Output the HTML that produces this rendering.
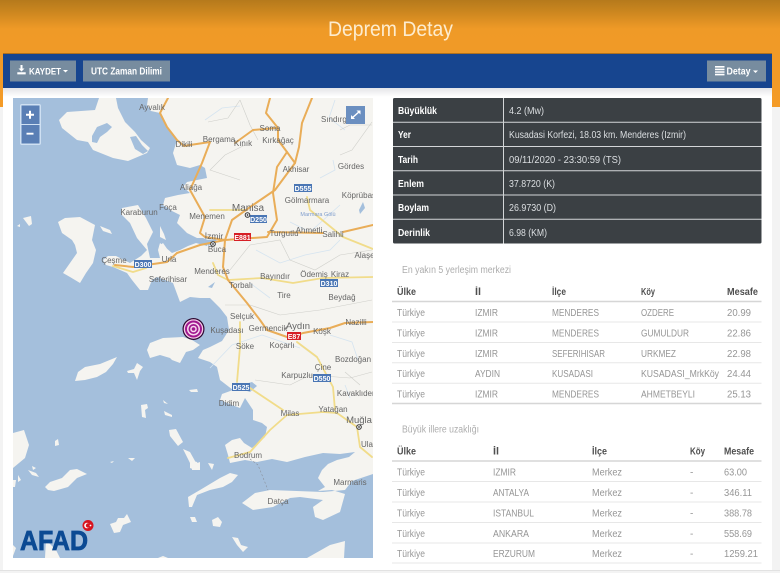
<!DOCTYPE html>
<html lang="tr"><head><meta charset="utf-8"><title>Deprem Detay</title>
<style>
html,body{margin:0;padding:0;width:780px;height:573px;overflow:hidden;background:#f3f3f3}
svg{display:block;font-family:"Liberation Sans",sans-serif;filter:blur(.3px)}
.lb{font-size:8px;fill:#666}
.bd{font-size:7px;font-weight:bold;fill:#fff;text-anchor:middle}
.w{font-size:10px;font-weight:bold;fill:#fff}
.v{font-size:10px;fill:#dcdfe2}
.h{font-size:10px;font-weight:bold;fill:#4f4f4f}
.c{font-size:10px;fill:#969696}
.t{font-size:10px;fill:#adadad}
.lm{stroke:#e7e7e7;stroke-width:1}
.lh{stroke:#d6d6d6;stroke-width:1.500}
</style></head><body>
<svg width="780" height="573" viewBox="0 0 780 573" xmlns="http://www.w3.org/2000/svg">
<defs>
<linearGradient id="top" x1="0" y1="0" x2="0" y2="1"><stop offset="0" stop-color="#b57a1c"/><stop offset=".1" stop-color="#c9851f"/><stop offset=".27" stop-color="#ef9a27"/><stop offset="1" stop-color="#f49b27"/></linearGradient>
<linearGradient id="sh" x1="0" y1="0" x2="0" y2="1"><stop offset="0" stop-color="#e4e5e8"/><stop offset="1" stop-color="#fff"/></linearGradient>
<clipPath id="mc"><rect x="13" y="98" width="360" height="460"/></clipPath>
</defs>
<rect width="780" height="573" fill="#f3f3f3"/>
<rect width="780" height="107" fill="url(#top)"/>
<rect x="3" y="54" width="769" height="516" fill="#fff"/>
<rect x="3" y="88" width="769" height="9" fill="url(#sh)"/>
<rect x="0" y="570" width="780" height="1" fill="#e2e2e2"/>
<rect x="3" y="53" width="769" height="1" fill="#b0701c"/>
<rect x="3" y="54" width="769" height="34" fill="#17458f"/>
<text x="328" y="36" font-size="21" fill="#fdeccf" textLength="125" lengthAdjust="spacingAndGlyphs">Deprem Detay</text>

<!-- Buttons -->
<rect x="10" y="60.500" width="66" height="21" fill="#778c9f"/>
<path d="M20.500 65h2v3.500h2l-3 3-3-3h2zM17.300 72.200h8.400v2.200h-8.400z" fill="#fff"/>
<text x="29" y="74.500" font-size="9.500" font-weight="bold" fill="#fff" textLength="32" lengthAdjust="spacingAndGlyphs">KAYDET</text>
<path d="M63 70h5l-2.500 2.500z" fill="#fff"/>
<rect x="83" y="60.500" width="87" height="21" fill="#778c9f"/>
<text x="91" y="74.500" font-size="10" font-weight="bold" fill="#fff" textLength="71" lengthAdjust="spacingAndGlyphs">UTC Zaman Dilimi</text>
<rect x="707" y="60.500" width="59" height="21" fill="#778c9f"/>
<path d="M715 66h9.500v1.600H715zM715 68.600h9.500v1.600H715zM715 71.200h9.500v1.600H715zM715 73.800h9.500v1.600H715z" fill="#fff"/>
<text x="726.500" y="74.500" font-size="10" font-weight="bold" fill="#fff" textLength="24" lengthAdjust="spacingAndGlyphs">Detay</text>
<path d="M753 70.500h5l-2.500 2.500z" fill="#fff"/>

<!-- Map -->
<g clip-path="url(#mc)">
<rect x="13" y="98" width="360" height="460" fill="#a4bfdc"/>
<g fill="#f5f4f0">
<!-- Mainland -->
<path d="M148 98L147 105 151 111 160 113 167 127 177 140 173 153 177 165 190 168 200 165 205 168 207 178 197 180 187 182 183 187 190 193 178 195 165 198 163 205 172 211 180 215 177 223 187 233 197 238 203 238 208 240 207 246 196 243 188 246 180 250 172 253 165 247 160 243 158 250 160 258 150 258 147 244 153 232 146 218 138 205 122 208 121 214 130 223 137 238 147 250 141 256 130 263 116 256 108 256 103 260 106 265 113 267 127 273 132 280 140 290 148 290 152 280 157 277 173 283 180 302 190 297 200 298 210 298 220 308 227 317 229 330 222 341 210 347 203 350 198 358 210 362 217 367 220 380 233 390 222 394 220 400 232 405 240 408 245 398 249 404 253 410 253 420 262 423 267 427 265 437 258 443 252 448 244 443 240 438 232 440 225 445 228 455 230 463 245 460 257 462 272 459 287 462 305 457 323 453 340 454 355 452 349 457 337 460 328 464 322 470 318 478 325 487 318 491 332 490 345 494 340 512 323 520 315 517 313 507 323 500 300 497 290 498 273 507 253 510 242 503 255 493 270 490 323 492 345 490 352 481 373 474V98Z"/>
<!-- Lesbos -->
<path d="M99 98L95 110 67 112 59 120 62 128 77 140 88 142 93 150 113 158 128 161 147 153 150 148 141 140 135 132 125 122 118 108 116 98Z"/>
<!-- Chios -->
<path d="M58 222L65 218 80 217 95 225 92 240 96 250 93 263 86 273 80 283 70 277 63 273 70 263 77 253 75 245 72 240 62 233Z"/>
<path d="M23 218L31 216 32 224 29 226 26 222ZM17 226L20 224 20 227Z"/>
<path d="M100 226L110 230 112 234 103 231ZM160 226L164 234 166 240 160 237ZM159 246L163 243 170 253 160 258Z"/>
<!-- Samos -->
<path d="M147 350L150 343 163 338 183 337 192 340 200 345 193 350 186 352 180 363 172 360 170 358 160 355 150 358Z"/>
<!-- Ikaria -->
<path d="M75 381L78 372 85 367 100 364 117 357 113 364 106 372 97 377 85 380Z"/>
<path d="M127 371L134 369 137 363 143 367 140 371 137 380 134 373 128 373ZM189 390L197 389 198 392 191 392ZM141 405L147 404 148 408 145 410 146 418 142 417ZM163 400L168 404 164 403ZM164 411L172 415 172 417 165 415Z"/>
<path d="M169 430L176 429 183 442 178 446 170 436ZM183 449L190 452 195 461 197 468 200 465 200 470 193 470 190 463Z"/>
<!-- Kos -->
<path d="M188 497L200 490 220 478 230 473 238 475 232 482 223 487 210 490 197 495 192 507 189 507Z"/>
<path d="M190 460L197 462 200 468 195 470 190 468ZM192 465L200 462V470L192 470ZM208 463L214 464 212 470ZM212 520L218 517 222 522 220 527 213 526ZM232 537L238 538 241 545 248 547 243 552 237 545ZM190 517H195L197 522 192 522Z"/>
<!-- Western islands -->
<path d="M13 433L24 430 29 445 25 458 13 468ZM13 480L16 480 15 487 13 487ZM13 545L16 548 13 556ZM48 490L45 487 50 482 62 478 70 470 77 469 87 474 77 478 68 487 54 491ZM28 470L36 473 39 477 32 475ZM32 466L36 468 33 470ZM18 475L21 480 18 482ZM110 524L116 522 118 518 124 518 127 514 131 522 123 525 120 532 114 533ZM55 441L58 439 59 445 55 446ZM128 458L135 458 132 461ZM110 462L114 461 112 463ZM46 540L56 550 60 558 45 558ZM158 558L163 556 168 558Z"/>
<path d="M307 558L330 545 345 541 344 558Z"/>
</g>
<g fill="#a4bfdc">
<path d="M92 136L97 127 107 123 112 127 107 132 100 137 97 143 92 142ZM130 137L136 136 142 145 148 151 143 154 135 149Z"/>
<path d="M245 384L252 382 257 386 250 392 244 390Z"/>
<path d="M359 210L363 202 365 208 360 214Z"/>
<path d="M206 240L216 239 217 242 208 246Z"/>
<path d="M208 287L215 282 212 288Z"/>
</g>
<!-- rivers and borders -->
<g fill="none" stroke="#d5e4f0" stroke-width=".8">
<path d="M205 120L222 108 240 106M335 100L329 118 345 130M333 160L335 170 320 178M290 222L310 232 340 205M256 250L280 263 305 255 330 250 340 240M250 283L270 298M210 368L232 345 262 335M262 335L300 348M330 335L352 342 358 360M345 385L350 398M300 345L320 360"/>
</g>
<g fill="none" stroke="#cfcfca" stroke-width=".6">
<path d="M208 122L228 118 240 100M240 100L250 125 258 140M240 180L210 170 225 155 245 145M340 130L350 125 372 125M340 155L352 150 372 122M230 270L250 245 280 240 290 260 315 270 340 255 372 250M225 305L250 305 280 315 320 310 372 300M255 380L290 385 310 375 350 378 372 372M345 372L360 385"/>
</g>
<path d="M250 459L258 465 268 490" fill="none" stroke-dasharray="2 2" stroke="#8a8f98" stroke-width=".6"/>
<!-- yellow roads -->
<g fill="none" stroke="#f1dc8a" stroke-width="1.800" stroke-linejoin="round" stroke-linecap="round">
<path d="M228 458L250 452 270 430 287 415 323 412 337 413 357 427 360 447 372 457"/>
<path d="M297 342L317 357 333 387 335 410"/>
<path d="M240 322L240 347 237 382M250 388L283 410"/>
<path d="M307 197L310 210 343 237 373 249"/>
<path d="M228 280L262 278 293 283 323 278 373 277"/>
<path d="M213 263L218 275 228 280M210 210L247 210"/>
<path d="M113 266L133 272 146 268"/>
</g>
<!-- orange roads -->
<g fill="none" stroke="#e9ad58" stroke-width="2" stroke-linejoin="round" stroke-linecap="round">
<path d="M312 98L302 123 299 147 295 163 275 190 253 205 232 220 225 240"/>
<path d="M270 98L266 113 278 128 278 140 287 152 295 163"/>
<path d="M287 152L277 167 273 193 277 220 267 237 225 240"/>
<path d="M168 98L160 113 167 127 177 140 184 146 190 145 210 142 202 163 190 190 205 217 200 233 205 237 225 240"/>
<path d="M235 143L253 130 277 128"/>
<path d="M225 240L200 245 177 253 167 262 133 267 115 265"/>
<path d="M225 240L223 267 228 280 247 303 260 320 267 330 290 338 303 333 330 328 345 323 373 322"/>
<path d="M268 232L323 233M343 232L373 225"/>
</g>
<!-- Labels -->
<g text-anchor="middle">
<text class="lb" x="152" y="110">Ayvalık</text><text class="lb" x="219" y="142">Bergama</text><text class="lb" x="243" y="146">Kınık</text><text class="lb" x="270" y="131">Soma</text><text class="lb" x="278" y="143">Kırkağaç</text><text class="lb" x="335" y="122">Sındırgı</text><text class="lb" x="184" y="147">Dikili</text><text class="lb" x="296" y="172">Akhisar</text><text class="lb" x="351" y="169">Gördes</text><text class="lb" x="307" y="203">Gölmarmara</text><text class="lb" x="360" y="198">Köprübaşı</text><text class="lb" x="191" y="190">Aliağa</text><text class="lb" x="168" y="210">Foça</text><text class="lb" x="139" y="215">Karaburun</text><text class="lb" x="207" y="219">Menemen</text><text x="248" y="211" font-size="10" fill="#666">Manisa</text><text x="318" y="216" font-size="5.500" fill="#7e9ccc">Marmara Gölü</text><text class="lb" x="284" y="236">Turgutlu</text><text class="lb" x="309" y="233">Ahmetli</text><text class="lb" x="333" y="237">Salihli</text><text class="lb" x="369" y="258">Alaşehir</text><text x="214" y="239" font-size="8.500" fill="#666">İzmir</text><text class="lb" x="217" y="252">Buca</text><text class="lb" x="212" y="274">Menderes</text><text class="lb" x="169" y="262">Urla</text><text class="lb" x="114" y="263">Çeşme</text><text class="lb" x="168" y="282">Seferihisar</text><text class="lb" x="275" y="279">Bayındır</text><text class="lb" x="314" y="277">Ödemiş</text><text class="lb" x="340" y="277">Kiraz</text><text class="lb" x="241" y="288">Torbalı</text><text class="lb" x="284" y="298">Tire</text><text class="lb" x="342" y="300">Beydağ</text><text class="lb" x="242" y="319">Selçuk</text><text class="lb" x="268" y="331">Germencik</text><text x="298" y="329" font-size="9.500" fill="#666">Aydın</text><text class="lb" x="356" y="325">Nazilli</text><text class="lb" x="227" y="333">Kuşadası</text><text class="lb" x="322" y="334">Köşk</text><text class="lb" x="282" y="348">Koçarlı</text><text class="lb" x="245" y="349">Söke</text><text class="lb" x="353" y="362">Bozdoğan</text><text class="lb" x="323" y="370">Çine</text><text class="lb" x="297" y="378">Karpuzlu</text><text class="lb" x="358" y="396">Kavaklıdere</text><text class="lb" x="229" y="406">Didim</text><text class="lb" x="290" y="416">Milas</text><text class="lb" x="333" y="412">Yatağan</text><text x="359" y="423" font-size="9.500" fill="#666">Muğla</text><text class="lb" x="367" y="447">Ula</text><text class="lb" x="248" y="458">Bodrum</text><text class="lb" x="350" y="485">Marmaris</text><text class="lb" x="278" y="504">Datça</text>
</g>
<!-- Road badges -->
<rect x="134" y="260" width="18" height="8" fill="#4a76b4"/><text class="bd" x="143" y="267">D300</text>
<rect x="294" y="184" width="18" height="8" fill="#4a76b4"/><text class="bd" x="303" y="191">D555</text>
<rect x="250" y="215" width="17" height="8" fill="#4a76b4"/><text class="bd" x="258.500" y="222">D250</text>
<rect x="320" y="279" width="18" height="8" fill="#4a76b4"/><text class="bd" x="329" y="286">D310</text>
<rect x="313" y="374" width="18" height="8" fill="#4a76b4"/><text class="bd" x="322" y="381">D550</text>
<rect x="232" y="383" width="18" height="8" fill="#4a76b4"/><text class="bd" x="241" y="390">D525</text>
<rect x="234" y="233" width="17" height="8" fill="#d61f26"/><text class="bd" x="242.500" y="240">E881</text>
<rect x="287" y="332" width="14" height="8" fill="#d61f26"/><text class="bd" x="294" y="339">E87</text>
<!-- City markers -->
<g fill="#fff" stroke="#333" stroke-width="1"><circle cx="247.500" cy="215" r="2.300"/><circle cx="213" cy="244" r="2.300"/><circle cx="359" cy="427" r="2.300"/></g>
<g fill="#333"><circle cx="247.500" cy="215" r=".9"/><circle cx="213" cy="244" r=".9"/><circle cx="359" cy="427" r=".9"/></g>
<!-- Epicentre -->
<circle cx="193.500" cy="329" r="11" fill="#2c0830"/>
<circle cx="193.500" cy="329" r="9.800" fill="#f4cbe8"/>
<circle cx="193.500" cy="329" r="8.500" fill="#a0178f"/>
<circle cx="193.500" cy="329" r="6.500" fill="#f7d8ee"/>
<circle cx="193.500" cy="329" r="5" fill="#a0178f"/>
<circle cx="193.500" cy="329" r="3.300" fill="#f7d8ee"/>
<circle cx="193.500" cy="329" r="1.800" fill="#a0178f"/>
</g>
<!-- Map controls -->
<rect x="20" y="104" width="21" height="41" rx="2" fill="#cfe0f2"/>
<rect x="21.500" y="105.500" width="18" height="18.500" fill="#5a7fb5"/>
<rect x="21.500" y="125" width="18" height="18.500" fill="#5a7fb5"/>
<path d="M26 113.800h8v2h-8zM29 110.800h2v8h-2zM26.500 132.800h7v1.800h-7z" fill="#fff"/>
<rect x="346" y="106" width="19" height="18" fill="#6b8fc0"/>
<path d="M351.500 118.500L360 111" stroke="#fff" stroke-width="1.500" fill="none"/>
<path d="M356.500 110.500h4v4zM351 115v4h4z" fill="#fff"/>
<!-- AFAD logo -->
<text x="20" y="550" font-size="28" font-weight="bold" fill="#0c4a93" stroke="#0c4a93" stroke-width=".8" textLength="68" lengthAdjust="spacingAndGlyphs">AFAD</text>
<circle cx="88" cy="525.500" r="5.500" fill="#d7141f"/>
<circle cx="87" cy="525.500" r="2.800" fill="#fff"/><circle cx="88" cy="525.500" r="2.200" fill="#d7141f"/>
<circle cx="90.500" cy="525.500" r=".9" fill="#fff"/>

<!-- Detail table -->
<rect x="393" y="98" width="368.500" height="145.500" rx="1.500" fill="#3b4044"/>
<path d="M393 122.300h368.500M393 146.500h368.500M393 170.800h368.500M393 195h368.500M393 219.300h368.500" stroke="#d3d6d8" stroke-width="1"/>
<path d="M503.500 98v145.500" stroke="#d3d6d8" stroke-width="1"/>
<text class="w" x="398" y="114" textLength="39" lengthAdjust="spacingAndGlyphs">Büyüklük</text>
<text class="w" x="398" y="138" textLength="13" lengthAdjust="spacingAndGlyphs">Yer</text>
<text class="w" x="398" y="163" textLength="20" lengthAdjust="spacingAndGlyphs">Tarih</text>
<text class="w" x="398" y="187" textLength="26" lengthAdjust="spacingAndGlyphs">Enlem</text>
<text class="w" x="398" y="211" textLength="31" lengthAdjust="spacingAndGlyphs">Boylam</text>
<text class="w" x="398" y="236" textLength="32" lengthAdjust="spacingAndGlyphs">Derinlik</text>
<text class="v" x="509" y="114" textLength="35" lengthAdjust="spacingAndGlyphs">4.2 (Mw)</text>
<text class="v" x="509" y="138" textLength="177" lengthAdjust="spacingAndGlyphs">Kusadasi Korfezi, 18.03 km. Menderes (Izmir)</text>
<text class="v" x="509" y="163" textLength="112" lengthAdjust="spacingAndGlyphs">09/11/2020 - 23:30:59 (TS)</text>
<text class="v" x="509" y="187" textLength="46" lengthAdjust="spacingAndGlyphs">37.8720 (K)</text>
<text class="v" x="509" y="211" textLength="47" lengthAdjust="spacingAndGlyphs">26.9730 (D)</text>
<text class="v" x="509" y="236" textLength="38" lengthAdjust="spacingAndGlyphs">6.98 (KM)</text>

<!-- Table 1 -->
<text class="t" x="402" y="273" textLength="109" lengthAdjust="spacingAndGlyphs">En yakın 5 yerleşim merkezi</text>
<text class="h" x="397" y="295" textLength="19" lengthAdjust="spacingAndGlyphs">Ülke</text>
<text class="h" x="475" y="295" textLength="6" lengthAdjust="spacingAndGlyphs">İl</text>
<text class="h" x="552" y="295" textLength="14" lengthAdjust="spacingAndGlyphs">İlçe</text>
<text class="h" x="641" y="295" textLength="14" lengthAdjust="spacingAndGlyphs">Köy</text>
<text class="h" x="727" y="295" textLength="31" lengthAdjust="spacingAndGlyphs">Mesafe</text>
<path class="lh" d="M392 301.500h369.500"/>
<path class="lm" d="M392 322h369.500M392 342.500h369.500M392 362.800h369.500M392 383.300h369.500"/>
<path class="lh" d="M392 403.500h369.500"/>
<g>
<text class="c" x="397" y="316" textLength="28" lengthAdjust="spacingAndGlyphs">Türkiye</text><text class="c" x="475" y="316" textLength="23" lengthAdjust="spacingAndGlyphs">IZMIR</text><text class="c" x="552" y="316" textLength="47" lengthAdjust="spacingAndGlyphs">MENDERES</text><text class="c" x="641" y="316" textLength="33" lengthAdjust="spacingAndGlyphs">OZDERE</text><text class="c" x="727" y="316" textLength="24" lengthAdjust="spacingAndGlyphs">20.99</text>
<text class="c" x="397" y="336.500" textLength="28" lengthAdjust="spacingAndGlyphs">Türkiye</text><text class="c" x="475" y="336.500" textLength="23" lengthAdjust="spacingAndGlyphs">IZMIR</text><text class="c" x="552" y="336.500" textLength="47" lengthAdjust="spacingAndGlyphs">MENDERES</text><text class="c" x="641" y="336.500" textLength="48" lengthAdjust="spacingAndGlyphs">GUMULDUR</text><text class="c" x="727" y="336.500" textLength="24" lengthAdjust="spacingAndGlyphs">22.86</text>
<text class="c" x="397" y="357" textLength="28" lengthAdjust="spacingAndGlyphs">Türkiye</text><text class="c" x="475" y="357" textLength="23" lengthAdjust="spacingAndGlyphs">IZMIR</text><text class="c" x="552" y="357" textLength="53" lengthAdjust="spacingAndGlyphs">SEFERIHISAR</text><text class="c" x="641" y="357" textLength="35" lengthAdjust="spacingAndGlyphs">URKMEZ</text><text class="c" x="727" y="357" textLength="24" lengthAdjust="spacingAndGlyphs">22.98</text>
<text class="c" x="397" y="377" textLength="28" lengthAdjust="spacingAndGlyphs">Türkiye</text><text class="c" x="475" y="377" textLength="25" lengthAdjust="spacingAndGlyphs">AYDIN</text><text class="c" x="552" y="377" textLength="41" lengthAdjust="spacingAndGlyphs">KUSADASI</text><text class="c" x="641" y="377" textLength="78" lengthAdjust="spacingAndGlyphs">KUSADASI_MrkKöy</text><text class="c" x="727" y="377" textLength="24" lengthAdjust="spacingAndGlyphs">24.44</text>
<text class="c" x="397" y="397.500" textLength="28" lengthAdjust="spacingAndGlyphs">Türkiye</text><text class="c" x="475" y="397.500" textLength="23" lengthAdjust="spacingAndGlyphs">IZMIR</text><text class="c" x="552" y="397.500" textLength="47" lengthAdjust="spacingAndGlyphs">MENDERES</text><text class="c" x="641" y="397.500" textLength="54" lengthAdjust="spacingAndGlyphs">AHMETBEYLI</text><text class="c" x="727" y="397.500" textLength="24" lengthAdjust="spacingAndGlyphs">25.13</text>
</g>

<!-- Table 2 -->
<text class="t" x="402" y="432.500" textLength="77" lengthAdjust="spacingAndGlyphs">Büyük illere uzaklığı</text>
<text class="h" x="397" y="454.500" textLength="19" lengthAdjust="spacingAndGlyphs">Ülke</text>
<text class="h" x="493" y="454.500" textLength="6" lengthAdjust="spacingAndGlyphs">İl</text>
<text class="h" x="592" y="454.500" textLength="15" lengthAdjust="spacingAndGlyphs">İlçe</text>
<text class="h" x="690" y="454.500" textLength="15" lengthAdjust="spacingAndGlyphs">Köy</text>
<text class="h" x="724" y="454.500" textLength="30" lengthAdjust="spacingAndGlyphs">Mesafe</text>
<path class="lh" d="M392 461h369.500"/>
<path class="lm" d="M392 481.500h369.500M392 502h369.500M392 522.500h369.500M392 543h369.500M392 563h369.500"/>
<g>
<text class="c" x="397" y="475.500" textLength="28" lengthAdjust="spacingAndGlyphs">Türkiye</text><text class="c" x="493" y="475.500" textLength="23" lengthAdjust="spacingAndGlyphs">IZMIR</text><text class="c" x="592" y="475.500" textLength="30" lengthAdjust="spacingAndGlyphs">Merkez</text><text class="c" x="690" y="475.500">-</text><text class="c" x="724" y="475.500" textLength="23" lengthAdjust="spacingAndGlyphs">63.00</text>
<text class="c" x="397" y="496" textLength="28" lengthAdjust="spacingAndGlyphs">Türkiye</text><text class="c" x="493" y="496" textLength="36" lengthAdjust="spacingAndGlyphs">ANTALYA</text><text class="c" x="592" y="496" textLength="30" lengthAdjust="spacingAndGlyphs">Merkez</text><text class="c" x="690" y="496">-</text><text class="c" x="724" y="496" textLength="28" lengthAdjust="spacingAndGlyphs">346.11</text>
<text class="c" x="397" y="516.500" textLength="28" lengthAdjust="spacingAndGlyphs">Türkiye</text><text class="c" x="493" y="516.500" textLength="41" lengthAdjust="spacingAndGlyphs">ISTANBUL</text><text class="c" x="592" y="516.500" textLength="30" lengthAdjust="spacingAndGlyphs">Merkez</text><text class="c" x="690" y="516.500">-</text><text class="c" x="724" y="516.500" textLength="28" lengthAdjust="spacingAndGlyphs">388.78</text>
<text class="c" x="397" y="537" textLength="28" lengthAdjust="spacingAndGlyphs">Türkiye</text><text class="c" x="493" y="537" textLength="36" lengthAdjust="spacingAndGlyphs">ANKARA</text><text class="c" x="592" y="537" textLength="30" lengthAdjust="spacingAndGlyphs">Merkez</text><text class="c" x="690" y="537">-</text><text class="c" x="724" y="537" textLength="28" lengthAdjust="spacingAndGlyphs">558.69</text>
<text class="c" x="397" y="557" textLength="28" lengthAdjust="spacingAndGlyphs">Türkiye</text><text class="c" x="493" y="557" textLength="42" lengthAdjust="spacingAndGlyphs">ERZURUM</text><text class="c" x="592" y="557" textLength="30" lengthAdjust="spacingAndGlyphs">Merkez</text><text class="c" x="690" y="557">-</text><text class="c" x="724" y="557" textLength="34" lengthAdjust="spacingAndGlyphs">1259.21</text>
</g>
</svg>
</body></html>
